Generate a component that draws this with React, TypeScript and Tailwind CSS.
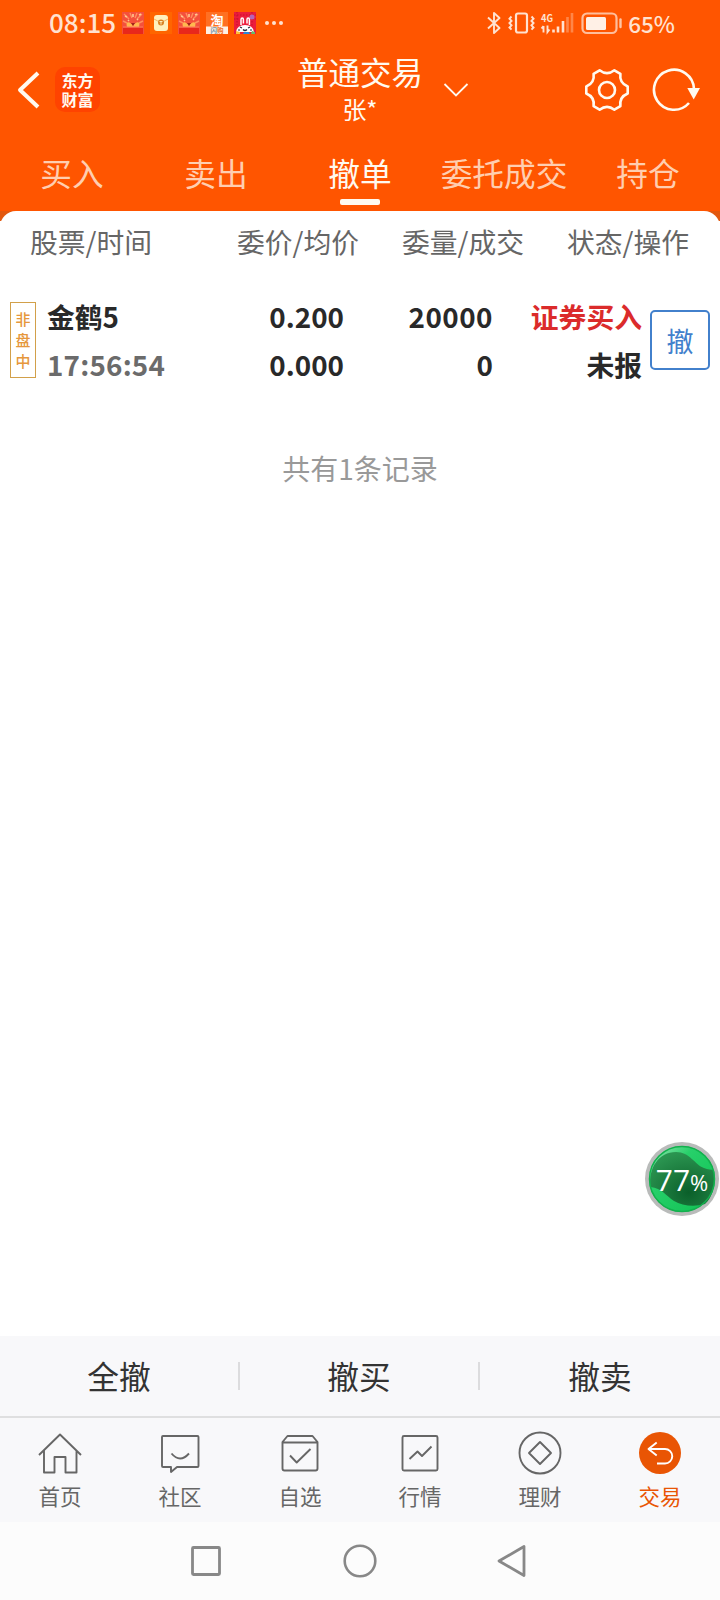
import type { ReactNode } from "react";
import clsx from "clsx";

const tabs = ["买入", "卖出", "撤单", "委托成交", "持仓"];
const actions = ["全撤", "撤买", "撤卖"];

const GiftIcon = () => (
  <svg viewBox="0 0 22 22" className="size-[22px]">
    <rect width="22" height="22" fill="#f4503c" />
    <path d="M2 2l5 5M20 2l-5 5M8 1l2 5M15 1l-2 5M1 9l4 2M21 9l-4 2" stroke="#ff8f5e" strokeWidth="1.4" />
    <path d="M3 4l2 1M17 3l2-1M11 2v3M6 8l1 1M15 8l1-1" stroke="#ffc890" strokeWidth="1.6" />
    <path d="M5 15c-2-6 3-6 6-1 3-5 8-5 6 1z" fill="#ffb84f" />
    <path d="M9 11l2 3 2-3z" fill="#a3261a" />
    <rect x="1" y="15" width="20" height="7" fill="#e8281c" />
    <rect x="1" y="14.500" width="20" height="1.200" fill="#ff7a5c" />
  </svg>
);

const PacketIcon = () => (
  <svg viewBox="0 0 22 22" className="size-[22px]">
    <rect width="22" height="22" fill="#ff6500" />
    <rect x="4" y="3" width="14" height="16" rx="3" fill="#fff0bd" />
    <path d="M4 7q7 5 14 0" fill="none" stroke="#f3b968" />
    <circle cx="11" cy="10.500" r="3" fill="#d98324" />
    <path d="M9.500 9.500h3M11 9.500v3" stroke="#fff0bd" strokeWidth="1" />
  </svg>
);

const TaobaoIcon = () => (
  <svg viewBox="0 0 22 22" className="size-[22px]" fontWeight="700" textAnchor="middle">
    <rect width="22" height="22" fill="#ff7022" />
    <rect y="14.500" width="22" height="7.500" fill="#fff1e3" />
    <text x="11" y="12.500" fontSize="13" fill="#fff">
      淘
    </text>
    <text x="11" y="20.700" fontSize="6.500" fill="#f0702a">
      <tspan fill="#7391a8">闪</tspan>购
    </text>
  </svg>
);

const MascotIcon = () => (
  <svg viewBox="0 0 22 22" className="size-[22px]">
    <rect width="22" height="22" fill="#ec1c3c" />
    <path d="M0 3h22M0 7h22M3 0v14M18 0v14" stroke="#c4102f" strokeDasharray="1.500 1.500" />
    <circle cx="18" cy="5" r="2.500" fill="#b565b8" />
    <path d="M7 13V7.500q0-1.500 1.200-1.500t1.200 1.500v4M13 11.500V7.500q0-1.500 1.200-1.500t1.200 1.500V13" fill="none" stroke="#fff" strokeWidth="1.500" />
    <path d="M2 20q1-7 9-7t9 7z" fill="#fff" />
    <path d="M6 15l2 1M14 16l2-1M9 17.500q2 2 4 0M4 18h2M16 18h2" stroke="#26293b" strokeWidth="1.200" fill="none" />
    <path d="M2 22v-3l4 1v2z" fill="#ffbf38" />
    <path d="M9 22l1-2h5l1 2z" fill="#2b87d8" />
    <path d="M17 22l1-3 3 1v2z" fill="#62bd6b" />
  </svg>
);

const StatusBar = () => (
  <div className="flex h-[46px] items-center justify-between pr-[45px] pl-[49px] text-[#ffe2d0]">
    <div className="flex items-center gap-1.5">
      <span className="mr-px w-[66px] pb-0.5 text-[26px] leading-none font-medium">08:15</span>
      <GiftIcon />
      <PacketIcon />
      <GiftIcon />
      <TaobaoIcon />
      <MascotIcon />
      <div className="ml-[3px] flex gap-[3.5px]">
        <i className="size-[3.5px] rounded-full bg-current" />
        <i className="size-[3.5px] rounded-full bg-current" />
        <i className="size-[3.5px] rounded-full bg-current" />
      </div>
    </div>
    <div className="flex items-center">
      <svg viewBox="0 0 136 24" className="h-6 w-[136px]" fill="none" stroke="currentColor" strokeWidth="1.900">
        <path d="M2 6.500l11.500 10.500-5.500 5V2l5.500 5L2 17.500" strokeLinejoin="round" />
        <rect x="30" y="2.500" width="11" height="19" rx="2" strokeWidth="2.200" />
        <path d="M25.500 5.500l-2 2.200 2 2.200-2 2.200 2 2.200-2 2.200 2 2.200M45.500 5.500l2 2.200-2 2.200 2 2.200-2 2.200 2 2.200-2 2.200" strokeWidth="2" />
        <path d="M57.500 15v6.500M55.500 17.500l2-2.500M61.500 14.500v6.500l2-2.500" strokeWidth="1.900" />
        <path d="M67.500 18.500v3M72 15.500v6M77 10v11.500" strokeWidth="2.600" />
        <path d="M81.500 6v15.500M86 2v19.500" strokeWidth="2.600" opacity=".35" />
        <text x="55" y="10.500" fontSize="10.500" fontWeight="700" fill="currentColor" stroke="none" textLength="12" lengthAdjust="spacingAndGlyphs">
          4G
        </text>
        <rect x="96.500" y="2.500" width="34" height="19.500" rx="4.500" strokeWidth="2.200" opacity=".75" />
        <rect x="100" y="6" width="20" height="13" rx="1.500" fill="#fff0e6" stroke="none" />
        <path d="M134.500 8.500v7.500" strokeWidth="2.400" strokeLinecap="round" opacity=".8" />
      </svg>
      <span className="ml-1.5 text-[22.5px] leading-none font-medium">65%</span>
    </div>
  </div>
);

const Header = () => (
  <header className="bg-[#ff5500] text-[#fffaf0]">
    <StatusBar />
    <div className="grid h-[87px] grid-cols-[1fr_auto_1fr] items-center">
      <div className="flex items-center pl-4">
        <svg viewBox="0 0 26 40" className="h-10 w-[26px]" fill="none" stroke="currentColor" strokeWidth="4">
          <path d="M22 3L4 20l18 17" strokeLinejoin="round" />
        </svg>
        <div className="ml-[13px] flex size-[45px] flex-col items-center justify-center rounded-[10px] bg-[#ff4300] text-[16px] leading-[19px] font-bold">
          <span>东方</span>
          <span>财富</span>
        </div>
      </div>
      <div className="flex flex-col items-center">
        <h1 className="text-[31.5px] leading-[38px]">普通交易</h1>
        <p className="text-2xl leading-[38px]">张*</p>
      </div>
      <div className="flex items-center pr-5 pl-5">
        <svg viewBox="0 0 26 16" className="h-4 w-[26px]" fill="none" stroke="currentColor" strokeWidth="1.800">
          <path d="M1.500 2L13 13.500 24.500 2" />
        </svg>
        <svg viewBox="-23 -23 46 46" className="ml-auto size-[46px]" fill="none" stroke="currentColor" strokeWidth="2.600" strokeLinejoin="round">
          <path d="M20.700-3.500V3.500Q12.100 7 13.400 16.200L7.400 19.700Q0 14-7.400 19.700L-13.400 16.200Q-12.100 7-20.700 3.500V-3.500Q-12.100-7-13.400-16.200L-7.400-19.700Q0-14 7.400-19.700L13.400-16.200Q12.100-7 20.700-3.500Z" />
          <circle r="8" />
        </svg>
        <svg viewBox="-22 -22 48 44" className="ml-[22px] h-11 w-12" fill="none" stroke="currentColor" strokeWidth="2.600">
          <path d="M15 13A20 20 0 1 1 20-1" />
          <path d="M13.300-2H26L19.700 9.500Z" fill="currentColor" stroke="none" />
        </svg>
      </div>
    </div>
    <nav className="grid h-[78px] grid-cols-5">
      {tabs.map((tab) => (
        <div key={tab} className={clsx("flex flex-col items-center pt-[15px]", tab !== "撤单" && "text-[#ffceb0]")}>
          <span className="text-[31.7px] leading-[48px] whitespace-nowrap">{tab}</span>
          {tab === "撤单" && <span className="mt-[3px] h-1.5 w-10 rounded-[2px] bg-[#fffaf0]" />}
        </div>
      ))}
    </nav>
  </header>
);

const OrderList = () => (
  <main className="flex-1 bg-[linear-gradient(#e2580e_10px,#fff_10px)]">
    <div className="h-full rounded-t-2xl bg-white">
      <div className="flex h-[61px] items-center justify-between pr-[31px] pl-[30px] text-[27.8px] text-[#666]">
        <span className="mr-[42px]">股票/时间</span>
        <span>委价/均价</span>
        <span>委量/成交</span>
        <span>状态/操作</span>
      </div>
      <div className="mt-[22px] flex h-[92px] items-center px-2.5 text-[27.8px] leading-[48px] font-bold text-[#292929]">
        <div className="flex h-[76px] w-[26px] flex-col items-center justify-center border border-[#d2a04a] pb-0.5 text-[15px] leading-[21px] font-medium text-[#e6973c]">
          <span>非</span>
          <span>盘</span>
          <span>中</span>
        </div>
        <div className="ml-[11px] w-[140px]">
          <p>金鹤5</p>
          <p className="tracking-[0.2px] text-[#6b6b6b]">17:56:54</p>
        </div>
        <div className="w-[157px] text-right">
          <p>0.200</p>
          <p>0.000</p>
        </div>
        <div className="w-[149px] text-right">
          <p className="tracking-[0.5px]">20000</p>
          <p>0</p>
        </div>
        <div className="w-[149px] text-right">
          <p className="text-[#db2b2b]">证券买入</p>
          <p>未报</p>
        </div>
        <button className="ml-auto size-[60px] rounded-[5px] border-2 border-[#4280cc] text-[27px] leading-none font-normal text-[#4280cc]">
          撤
        </button>
      </div>
      <p className="mt-[52px] text-center text-[28px] leading-[60px] text-[#999]">共有1条记录</p>
    </div>
  </main>
);

const FloatingBall = () => (
  <div className="absolute top-[1142px] left-[645px] size-[74px]">
    <svg viewBox="0 0 74 74" className="absolute inset-0 size-full">
      <defs>
        <linearGradient id="ring" x1="0" y1="0" x2="1" y2="1">
          <stop offset="0" stopColor="#9fe5b9" />
          <stop offset=".35" stopColor="#27d06a" />
          <stop offset="1" stopColor="#0fc052" />
        </linearGradient>
        <radialGradient id="dark" cx=".6" cy=".75" r=".75">
          <stop offset="0" stopColor="#0b5f2a" />
          <stop offset="1" stopColor="#2a9450" />
        </radialGradient>
      </defs>
      <circle cx="37" cy="37" r="37" fill="#b9bbba" />
      <circle cx="37" cy="37" r="33" fill="url(#ring)" />
      <path d="M5.500 45C3 26 14 10 31 10C45 10 50 23 59 26C63 27.500 66 27.500 69 28C71 44 67 56 60 62C50 65 37 64 29 59C21 54 17 46 5.500 45Z" fill="url(#dark)" />
      <circle cx="37" cy="37" r="32.500" fill="none" stroke="#12b04d" strokeWidth="1.500" />
    </svg>
    <div className="relative flex h-full items-baseline justify-center pt-[19px] font-['Open_Sans',sans-serif] text-white">
      <span className="text-[30px] leading-[38px]">77</span>
      <span className="text-[22px] leading-[38px] font-medium">%</span>
    </div>
  </div>
);

const navItems: { label: string; icon: ReactNode }[] = [
  {
    label: "首页",
    icon: <path d="M3 26L24 5.500 45 26M8 21.500V43.500H18.500V28H29.500V43.500H40.500V21.500" />,
  },
  {
    label: "社区",
    icon: (
      <>
        <path d="M7 7H41.500Q42.500 7 42.500 8V37Q42.500 38 41.500 38H21L15 43V38H7Q6 38 6 37V8Q6 7 7 7Z" />
        <path d="M15.500 24.500Q24 34.500 33 24.500" />
      </>
    ),
  },
  {
    label: "自选",
    icon: (
      <>
        <path d="M6.500 13L11.500 7H36.500L41.500 13V39.500Q41.500 41.500 39.500 41.500H8.500Q6.500 41.500 6.500 39.500ZM6.500 13.500H41.500" />
        <path d="M14 26.500L20.700 33.500 34.500 20" />
      </>
    ),
  },
  {
    label: "行情",
    icon: (
      <>
        <rect x="6.500" y="7" width="35" height="34.500" rx="1.500" />
        <path d="M13.500 30L21.500 22.500 26 27 35.500 17.500" />
      </>
    ),
  },
  {
    label: "理财",
    icon: (
      <>
        <circle cx="24" cy="24" r="20.500" />
        <path d="M24 13L35 24 24 35 13 24Z" />
      </>
    ),
  },
  {
    label: "交易",
    icon: (
      <>
        <circle cx="24" cy="24" r="21" fill="#e95504" stroke="none" />
        <path d="M20.700 13.500L12.500 20 20.700 26.500M12.500 20H29A7.200 7.200 0 0 1 29 34.500H21" stroke="#fff" />
      </>
    ),
  },
];

const BottomNav = () => (
  <nav className="grid h-[106px] grid-cols-6 border-t-2 border-[#dfdfe0] bg-[#f8f8fa] text-[#666]">
    {navItems.map(({ label, icon }) => (
      <div key={label} className={clsx("flex flex-col items-center pt-[11px]", label === "交易" && "text-[#e95504]")}>
        <svg viewBox="0 0 48 48" className="size-12" fill="none" stroke="currentColor" strokeWidth="1.900" strokeLinejoin="round">
          {icon}
        </svg>
        <span className="text-[21.5px] leading-[37px]">{label}</span>
      </div>
    ))}
  </nav>
);

const SystemNav = () => (
  <div className="flex h-[78px] items-center justify-center gap-[118px] bg-[#fcfcfc]">
    <svg viewBox="0 0 36 36" className="size-9" fill="none" stroke="#888" strokeWidth="2.800">
      <rect x="4.500" y="4.500" width="27" height="27" rx="1" />
    </svg>
    <svg viewBox="0 0 36 36" className="size-9" fill="none" stroke="#888" strokeWidth="2.600">
      <circle cx="18" cy="18" r="15.300" />
    </svg>
    <svg viewBox="0 0 36 36" className="size-9" fill="none" stroke="#888" strokeWidth="2.800" strokeLinejoin="round">
      <path d="M28 3.500V32.500L3 18Z" />
    </svg>
  </div>
);

export default function App() {
  return (
    <div className="relative flex h-[1600px] w-[720px] flex-col overflow-hidden bg-white font-['Noto_Sans_CJK_SC',sans-serif]">
      <Header />
      <OrderList />
      <div className="grid h-20 grid-cols-3 items-center bg-[#f8f8fa] text-[31.7px] text-[#333]">
        {actions.map((action, i) => (
          <div key={action} className={clsx("flex h-7 items-center justify-center", i < 2 && "border-r-2 border-[#dcdcde]")}>
            {action}
          </div>
        ))}
      </div>
      <BottomNav />
      <SystemNav />
      <FloatingBall />
    </div>
  );
}
